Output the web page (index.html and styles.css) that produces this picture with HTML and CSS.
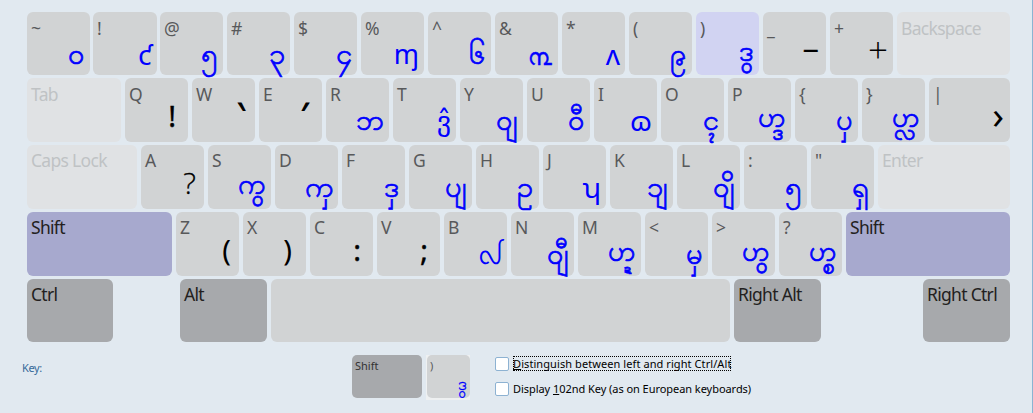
FILE: index.html
```html
<!DOCTYPE html>
<html lang="my">
<head>
<meta charset="utf-8">
<title>On-screen keyboard</title>
<link rel="stylesheet" href="styles.css">
</head>
<body>
<main class="keyboard">
  <div class="row digits">
    <div class="key"><span class="cap">~</span><span class="glyph">၀</span></div>
    <div class="key"><span class="cap">!</span><span class="glyph plain raised">ƈ</span></div>
    <div class="key"><span class="cap">@</span><span class="glyph">၅</span></div>
    <div class="key"><span class="cap">#</span><span class="glyph">၃</span></div>
    <div class="key"><span class="cap">$</span><span class="glyph">၄</span></div>
    <div class="key"><span class="cap">%</span><span class="glyph plain seven">ɱ</span></div>
    <div class="key"><span class="cap">^</span><span class="glyph">၆</span></div>
    <div class="key"><span class="cap">&amp;</span><span class="glyph plain digit">൩</span></div>
    <div class="key"><span class="cap">*</span><span class="glyph plain">ʌ</span></div>
    <div class="key"><span class="cap">(</span><span class="glyph">၉</span></div>
    <div class="key lit"><span class="cap">)</span><span class="glyph stack">ဒွ</span></div>
    <div class="key"><span class="cap">_</span><span class="glyph mark dash">−</span></div>
    <div class="key"><span class="cap">+</span><span class="glyph mark plus">+</span></div>
    <div class="key off grow"><span class="cap">Backspace</span></div>
  </div>
  <div class="row">
    <div class="key off tab"><span class="cap">Tab</span></div>
    <div class="key"><span class="cap">Q</span><span class="glyph mark punct">!</span></div>
    <div class="key"><span class="cap">W</span><span class="glyph mark tick">‵</span></div>
    <div class="key"><span class="cap">E</span><span class="glyph mark tick prime">′</span></div>
    <div class="key"><span class="cap">R</span><span class="glyph">ဘ</span></div>
    <div class="key"><span class="cap">T</span><span class="glyph plain">ვ̂</span></div>
    <div class="key"><span class="cap">Y</span><span class="glyph">ဝျ</span></div>
    <div class="key"><span class="cap">U</span><span class="glyph">ဝီ</span></div>
    <div class="key"><span class="cap">I</span><span class="glyph plain">ɷ</span></div>
    <div class="key"><span class="cap">O</span><span class="glyph">ၚ</span></div>
    <div class="key"><span class="cap">P</span><span class="glyph stack">ဟ္ဒ</span></div>
    <div class="key"><span class="cap">{</span><span class="glyph">ပှ</span></div>
    <div class="key"><span class="cap">}</span><span class="glyph stack">ဟ္လ</span></div>
    <div class="key grow"><span class="cap">|</span><span class="glyph mark angle">›</span></div>
  </div>
  <div class="row">
    <div class="key off caps"><span class="cap">Caps Lock</span></div>
    <div class="key"><span class="cap">A</span><span class="glyph mark query">?</span></div>
    <div class="key"><span class="cap">S</span><span class="glyph stack">ကွ</span></div>
    <div class="key"><span class="cap">D</span><span class="glyph">ကှ</span></div>
    <div class="key"><span class="cap">F</span><span class="glyph">ဒှ</span></div>
    <div class="key"><span class="cap">G</span><span class="glyph">ပျ</span></div>
    <div class="key"><span class="cap">H</span><span class="glyph">ဥ</span></div>
    <div class="key"><span class="cap">J</span><span class="glyph plain">ʮ</span></div>
    <div class="key"><span class="cap">K</span><span class="glyph">ၥျ</span></div>
    <div class="key"><span class="cap">L</span><span class="glyph">ဝျိ</span></div>
    <div class="key"><span class="cap">:</span><span class="glyph">၅</span></div>
    <div class="key"><span class="cap">"</span><span class="glyph">ရှ</span></div>
    <div class="key off grow"><span class="cap">Enter</span></div>
  </div>
  <div class="row">
    <div class="key held shift"><span class="cap">Shift</span></div>
    <div class="key"><span class="cap">Z</span><span class="glyph mark paren">(</span></div>
    <div class="key"><span class="cap">X</span><span class="glyph mark paren right">)</span></div>
    <div class="key"><span class="cap">C</span><span class="glyph mark punct">:</span></div>
    <div class="key"><span class="cap">V</span><span class="glyph mark punct">;</span></div>
    <div class="key"><span class="cap">B</span><span class="glyph plain narrow">ᩓ</span></div>
    <div class="key"><span class="cap">N</span><span class="glyph">ဝျီ</span></div>
    <div class="key"><span class="cap">M</span><span class="glyph stack">ဟ္ဍ</span></div>
    <div class="key"><span class="cap">&lt;</span><span class="glyph">မှ</span></div>
    <div class="key"><span class="cap">&gt;</span><span class="glyph stack">ဟွ</span></div>
    <div class="key"><span class="cap">?</span><span class="glyph stack">ဟ္စ</span></div>
    <div class="key held grow"><span class="cap">Shift</span></div>
  </div>
  <div class="row bottom">
    <div class="key dark ctrl"><span class="cap">Ctrl</span></div>
    <div class="key dark alt"><span class="cap">Alt</span></div>
    <div class="key space"></div>
    <div class="key dark ralt"><span class="cap">Right Alt</span></div>
    <div class="key dark rctrl"><span class="cap">Right Ctrl</span></div>
  </div>
</main>
<footer class="legend">
  <span class="legend-title">Key:</span>
  <div class="mini dark">Shift</div>
  <div class="mini-frame"><div class="mini pair"><span>)</span><span class="mini-glyph">ဒွ</span></div></div>
  <div class="options">
    <label class="option"><i class="box"></i><span class="focus"><u>D</u>istinguish between left and right Ctrl/Alt</span></label>
    <label class="option"><i class="box"></i><span>Display <u>1</u>02nd Key (as on European keyboards)</span></label>
  </div>
</footer>
</body>
</html>
```

FILE: styles.css
```css
* { box-sizing: border-box; }
body {
  margin: 0;
  height: 413px;
  overflow: hidden;
  background: #e1e9f0;
  border-right: 1px solid #8bb4d2;
  font-family: "Noto Sans", sans-serif;
}
.keyboard {
  width: 1010px;
  padding: 12px 0 0 27px;
  display: flex;
  flex-direction: column;
  gap: 3px;
}
.row { display: flex; gap: 4px; height: 64px; }
.row.digits { height: 63px; }
.row.digits .key:first-child { margin-right: -1px; }
.row.digits .key:nth-child(2) { width: 64px; margin-right: -1px; }
.row.bottom { height: 63px; }
.key {
  display: flex;
  justify-content: space-between;
  width: 63px;
  flex: none;
  border-radius: 6px;
  background: #d1d3d4;
}
.key.grow { flex: 1; }
.key.lit { background: #d1d3f2; }
.key.off { background: #e0e2e4; }
.key.off .cap { color: #bfc2c4; }
.key.held { background: #a7a9ce; }
.key.dark, .mini.dark { background: #a7a9ac; }
.key.held .cap, .key.dark .cap { color: #231f20; }
.tab { width: 94px; }
.caps { width: 110px; }
.shift { width: 145px; }
.ctrl { width: 86px; margin-right: 63px; }
.alt { width: 87px; }
.space { width: 459px; }
.ralt { width: 87px; margin-right: 98px; }
.rctrl { width: 87px; }
.cap {
  padding: 4px 0 0 4px;
  font-size: 17.5px;
  line-height: 24px;
  letter-spacing: -0.7px;
  color: #58595b;
  white-space: nowrap;
}
.row:nth-child(n+3) .cap { padding-top: 3px; }
.glyph {
  margin-left: -12px;
  padding: 22px 5px 0 0;
  font-family: "DejaVu Sans", "Noto Sans", sans-serif;
  font-size: 29px;
  line-height: 40px;
  height: 64px;
  color: #00f;
  -webkit-text-stroke: 0.7px #00f;
  white-space: nowrap;
}
.glyph.stack { padding-top: 20px; font-size: 28px; }
.glyph.plain { font-family: "Noto Sans", "DejaVu Sans", sans-serif; font-size: 28px; -webkit-text-stroke: 0; }
.glyph.raised { padding-top: 22px; }
.glyph.seven { font-size: 27px; }
.glyph.digit { padding: 24px 6px 0 0; font-size: 23px; -webkit-text-stroke: 0.5px #00f; }
.glyph.narrow { font-size: 25px; }
.glyph.mark {
  padding-top: 18px;
  font-family: "Noto Sans", sans-serif;
  font-size: 29px;
  color: #000;
  -webkit-text-stroke: 0;
}
.glyph.dash { padding-right: 7px; -webkit-text-stroke: 0.3px #000; }
.glyph.punct { padding-right: 12px; -webkit-text-stroke: 0.4px #000; }
.glyph.paren { padding-right: 8px; }
.glyph.right { padding-right: 14px; }
.glyph.tick { padding-right: 9px; -webkit-text-stroke: 1.2px #000; padding-top: 15px; }
.glyph.prime { padding-right: 14px; }
.glyph.plus { font-family: "Open Sans", sans-serif; font-size: 35px; font-weight: 300; padding-right: 5px; }
.glyph.angle { font-size: 38px; padding: 16px 6px 0 0; }
.glyph.query { font-family: "Open Sans", sans-serif; font-weight: 300; font-size: 30px; padding-right: 8px; -webkit-text-stroke: 0.3px #000; }
.legend {
  display: flex;
  padding: 13px 0 0 22px;
  font-size: 11px;
  line-height: 15px;
}
.legend-title { width: 330px; padding-top: 5px; color: #36699a; letter-spacing: -0.4px; }
.mini { width: 70px; height: 43px; border-radius: 5px; padding: 3px 3px; color: #333; }
.mini-frame { margin-left: 4px; padding: 0 0 0 1px; height: 45px; background: #eef0f1; }
.mini.pair { width: 43px; background: #d1d3d4; display: flex; justify-content: space-between; color: #58595b; }
.mini-glyph { font-family: "DejaVu Sans", sans-serif; font-size: 17px; line-height: 20px; padding-top: 16px; color: #00f; -webkit-text-stroke: 0.3px #00f; }
.options { display: flex; flex-direction: column; gap: 10px; margin-left: 25px; padding-top: 1px; }
.option { display: flex; align-items: center; gap: 4px; height: 15px; color: #000; letter-spacing: -0.05px; white-space: nowrap; }
.box { width: 14px; height: 14px; border: 1px solid #8db2d2; border-radius: 2px; background: #fff; }
.focus { outline: 1px dotted #000; outline-offset: -1px; letter-spacing: 0.08px; }
```
